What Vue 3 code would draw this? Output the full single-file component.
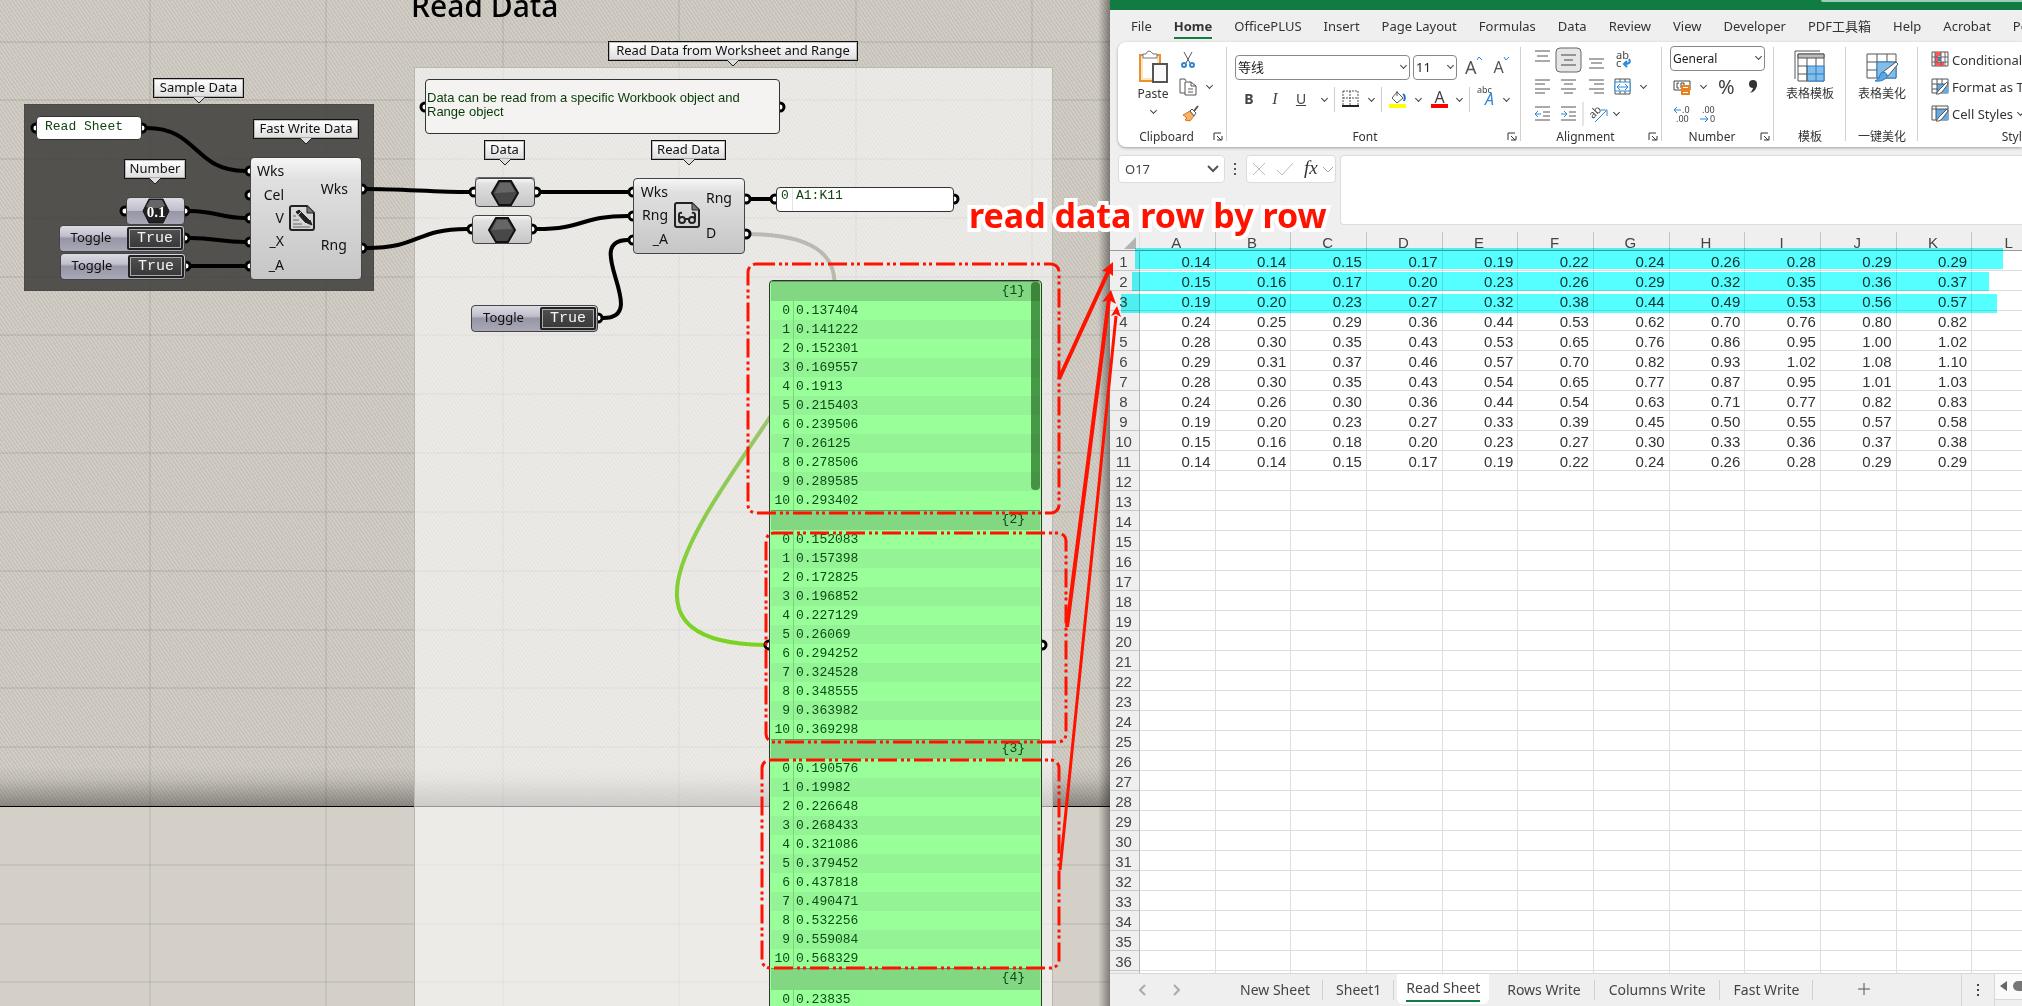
<script setup>
import { ref } from 'vue'

const gridX = [150, 326, 503, 679, 856, 1032]
const gridY = [42, 100, 159, 218, 277, 335, 394, 453, 512, 571, 630, 688, 747, 865, 924, 982]

const tags = [
  { text: 'Sample Data', x: 153, y: 78, w: 91 },
  { text: 'Fast Write Data', x: 253, y: 119, w: 106 },
  { text: 'Number', x: 124, y: 159, w: 62 },
  { text: 'Read Data from Worksheet and Range', x: 608, y: 41, w: 250 },
  { text: 'Data', x: 484, y: 140, w: 41 },
  { text: 'Read Data', x: 651, y: 140, w: 75 },
]

const grips = [
  [36, 128], [142, 128], [250, 171], [250, 195], [250, 218], [250, 242], [250, 266],
  [125, 211], [185, 211], [185, 238], [186, 266], [362, 189], [362, 248],
  [474, 192], [536, 192], [472, 229], [532, 229], [633, 192], [633, 216], [633, 240],
  [746, 199], [746, 234], [775, 199], [954, 199], [598, 318],
  [425, 107], [780, 107], [769, 645], [1042, 645],
]

const wires = [
  'M147 128C198 128 194 171 245 171',
  'M190 211C215 211 221 218 245 218',
  'M190 238C215 238 221 242 245 242',
  'M191 266H245',
  'M367 189C400 189 436 192 469 192',
  'M367 248C420 248 415 229 467 229',
  'M541 192H628',
  'M537 229C585 229 580 216 628 216',
  'M603 318C652 318 580 240 628 240',
  'M751 199H770',
]

const toggles = [
  { x: 59, y: 225, w: 126 },
  { x: 60, y: 253, w: 126 },
  { x: 471, y: 305, w: 127 },
]

const groups = [
  { path: '{1}', values: ['0.137404', '0.141222', '0.152301', '0.169557', '0.1913', '0.215403', '0.239506', '0.26125', '0.278506', '0.289585', '0.293402'] },
  { path: '{2}', values: ['0.152083', '0.157398', '0.172825', '0.196852', '0.227129', '0.26069', '0.294252', '0.324528', '0.348555', '0.363982', '0.369298'] },
  { path: '{3}', values: ['0.190576', '0.19982', '0.226648', '0.268433', '0.321086', '0.379452', '0.437818', '0.490471', '0.532256', '0.559084', '0.568329'] },
  { path: '{4}', values: ['0.23835'] },
]

const menu = ['File', 'Home', 'OfficePLUS', 'Insert', 'Page Layout', 'Formulas', 'Data', 'Review', 'View', 'Developer', 'PDF工具箱', 'Help', 'Acrobat', 'Power Pivot']
const columns = ['A', 'B', 'C', 'D', 'E', 'F', 'G', 'H', 'I', 'J', 'K', 'L']
const cells = [
  '0.14 0.14 0.15 0.17 0.19 0.22 0.24 0.26 0.28 0.29 0.29',
  '0.15 0.16 0.17 0.20 0.23 0.26 0.29 0.32 0.35 0.36 0.37',
  '0.19 0.20 0.23 0.27 0.32 0.38 0.44 0.49 0.53 0.56 0.57',
  '0.24 0.25 0.29 0.36 0.44 0.53 0.62 0.70 0.76 0.80 0.82',
  '0.28 0.30 0.35 0.43 0.53 0.65 0.76 0.86 0.95 1.00 1.02',
  '0.29 0.31 0.37 0.46 0.57 0.70 0.82 0.93 1.02 1.08 1.10',
  '0.28 0.30 0.35 0.43 0.54 0.65 0.77 0.87 0.95 1.01 1.03',
  '0.24 0.26 0.30 0.36 0.44 0.54 0.63 0.71 0.77 0.82 0.83',
  '0.19 0.20 0.23 0.27 0.33 0.39 0.45 0.50 0.55 0.57 0.58',
  '0.15 0.16 0.18 0.20 0.23 0.27 0.30 0.33 0.36 0.37 0.38',
  '0.14 0.14 0.15 0.17 0.19 0.22 0.24 0.26 0.28 0.29 0.29',
].map((row) => row.split(' '))
const lastRow = 36
const sheets = ['New Sheet', 'Sheet1', 'Read Sheet', 'Rows Write', 'Columns Write', 'Fast Write']

const activeMenu = ref('Home')
const activeSheet = ref('Read Sheet')
const cellName = ref('O17')
</script>

<template>
  <div class="page">
    <main class="canvas">
      <div class="hatch"></div>
      <svg class="layer" aria-hidden="true">
        <g stroke="#000" stroke-opacity=".13">
          <line v-for="x in gridX" :key="'x' + x" :x1="x" :x2="x" y1="0" y2="100%" stroke-width="1" />
          <line v-for="y in gridY" :key="'y' + y" :y1="y" :y2="y" x1="0" x2="100%" stroke-width="1" />
        </g>
      </svg>
      <h1 class="title">Read Data</h1>
      <section class="group dark"></section>
      <section class="group light"></section>

      <svg class="layer" aria-hidden="true">
        <defs>
          <linearGradient id="treeWire" x1="0" y1="0" x2="0" y2="1">
            <stop offset="0" stop-color="#b9bab5" />
            <stop offset=".15" stop-color="#b4bda6" />
            <stop offset=".5" stop-color="#97c766" />
            <stop offset="1" stop-color="#7ad321" />
          </linearGradient>
        </defs>
        <path d="M746 234C1046 234 462 645 769 645" fill="none" stroke="url(#treeWire)" stroke-width="4" />
        <g fill="none" stroke="#000" stroke-width="4">
          <path v-for="d in wires" :key="d" :d="d" />
        </g>
        <g fill="#fff" stroke="#000" stroke-width="3">
          <circle v-for="(g, i) in grips" :key="i" :cx="g[0]" :cy="g[1]" r="4" />
        </g>
      </svg>

      <div v-for="t in tags" :key="t.text" class="tag" :style="{ left: t.x + 'px', top: t.y + 'px', width: t.w + 'px' }">
        {{ t.text }}
        <svg width="12" height="8" viewBox="0 0 12 8"><path d="M0 0L6 6L12 0" fill="#dedede" stroke="#222" /></svg>
      </div>

      <div class="panel sheet-name">Read Sheet</div>
      <div class="panel note">Data can be read from a specific Workbook object and Range object</div>
      <div class="panel range"><span class="idx">0</span><span>A1:K11</span></div>

      <div class="node number-node">
        <svg width="28" height="26" viewBox="0 0 28 26">
          <path d="M7 1H21L27 13L21 25H7L1 13Z" fill="#222" stroke="#111" />
          <path d="M8 2H20L23 8Q14 12 4 9Z" fill="#666" />
          <text x="14" y="19" text-anchor="middle" class="hex-text">0.1</text>
        </svg>
      </div>
      <div class="node data-node first"><svg width="28" height="26" viewBox="0 0 28 26"><path d="M8 1H20L27 13L20 25H8L1 13Z" fill="#484848" stroke="#111" stroke-width="2" /><path d="M9 3H19L24 12L4 13Z" fill="#666" /></svg></div>
      <div class="node data-node second"><svg width="28" height="26" viewBox="0 0 28 26"><path d="M8 1H20L27 13L20 25H8L1 13Z" fill="#484848" stroke="#111" stroke-width="2" /><path d="M9 3H19L24 12L4 13Z" fill="#666" /></svg></div>

      <div v-for="(t, i) in toggles" :key="i" class="toggle" :style="{ left: t.x + 'px', top: t.y + 'px', width: t.w + 'px' }">
        <span>Toggle</span><button type="button">True</button>
      </div>

      <div class="node component write">
        <div class="ports in"><span>Wks</span><span>Cel</span><span>V</span><span>_X</span><span>_A</span></div>
        <svg width="28" height="28" viewBox="0 0 28 28" fill="none" stroke="#222" stroke-width="2">
          <path d="M4 2H19L26 9V24Q26 26 24 26H4Q2 26 2 24V4Q2 2 4 2Z" /><path d="M19 2V9H26" fill="#777" stroke-width="1" />
          <path d="M8 8L11 6L21 16L18 19Z" fill="#222" stroke-width="1" /><path d="M19 19L22 16L24 21Z" fill="#222" stroke-width="1" /><path d="M10 11L13 8" stroke="#ddd" stroke-width="1" /><path d="M5 12H8M5 16H11M5 20H14M5 23H22" stroke="#666" stroke-width="1" />
        </svg>
        <div class="ports out"><span>Wks</span><span>Rng</span></div>
      </div>
      <div class="node component read">
        <div class="ports in"><span>Wks</span><span>Rng</span><span>_A</span></div>
        <svg width="26" height="26" viewBox="0 0 26 26" fill="none" stroke="#222" stroke-width="2">
          <path d="M3 1H18L25 8V23Q25 25 23 25H3Q1 25 1 23V3Q1 1 3 1Z" /><path d="M18 1V8H25" fill="#777" stroke-width="1" />
          <circle cx="8" cy="18" r="3" /><circle cx="18" cy="18" r="3" /><path d="M11 17H15M5 17V13Q5 10 8 11M21 17V13Q21 10 18 11" />
        </svg>
        <div class="ports out"><span>Rng</span><span>D</span></div>
      </div>

      <div class="tree">
        <section v-for="g in groups" :key="g.path" class="branch">
          <div class="path">{{ g.path }}</div>
          <div v-for="(v, i) in g.values" :key="i" class="item"><span class="idx">{{ i }}</span><span>{{ v }}</span></div>
        </section>
        <div class="thumb"></div>
      </div>
      <div class="edge"></div>
    </main>

    <section class="excel">
      <div class="titlebar"><span></span></div>
      <nav class="menu">
        <button v-for="m in menu" :key="m" type="button" :class="{ active: m === activeMenu }" @click="activeMenu = m">{{ m }}</button>
      </nav>

      <div class="ribbon">
        <div class="rgroup clipboard">
          <div class="body">
            <button type="button" class="big paste">
              <svg width="32" height="34" viewBox="0 0 32 34" fill="none">
                <path d="M3 5H23V31H3Z" stroke="#e8912d" stroke-width="2" fill="#fbe3c3" /><path d="M6 8H20V28H6Z" fill="#fff" />
                <path d="M6 8V4H9Q10 1 12 1T16 4H20V8Z" fill="#fff" stroke="#777" /><path d="M16 14H30V32H16Z" fill="#fafafa" stroke="#555" stroke-width="2" />
              </svg>
              <span>Paste</span><i class="chev"></i>
            </button>
            <div class="stack">
              <div class="line"><svg width="14" height="18" viewBox="0 0 14 18" fill="none"><path d="M3 1L9 12M11 1L5 12" stroke="#555" /><circle cx="3" cy="14" r="2" stroke="#2b88d8" stroke-width="2" /><circle cx="11" cy="14" r="2" stroke="#2b88d8" stroke-width="2" /></svg></div>
              <div class="line"><svg width="18" height="18" viewBox="0 0 18 18" fill="none" stroke="#555"><path d="M6 15H1V1H6L7 3" /><path d="M6 4H12L17 8V17H6ZM12 4V8H17M9 11H14M9 14H14" /></svg><i class="chev"></i></div>
              <div class="line"><svg width="18" height="18" viewBox="0 0 18 18"><path d="M2 10L9 6L13 11L9 16L4 15L6 13Z" fill="#f4b26a" stroke="#d8741a" /><path d="M9 6L11 4L15 8L13 11Z" fill="#fff" stroke="#555" /><path d="M13 6L17 1" stroke="#555" stroke-width="2" /></svg></div>
            </div>
          </div>
          <div class="caption">Clipboard</div><svg class="launch" width="10" height="9" viewBox="0 0 10 9"><path d="M1 8V1H8M4 4L8 8M9 4V8H4" fill="none" stroke="#333" /></svg>
        </div>

        <div class="rgroup font">
          <div class="body col">
            <div class="line selects">
              <label class="pick wide"><select aria-label="Font"><option>等线</option></select><i class="chev"></i></label>
              <label class="pick size"><select aria-label="Font size"><option>11</option></select><i class="chev"></i></label>
              <button type="button" class="grow">A<svg width="7" height="16" viewBox="0 0 7 16"><path d="M1 5L3 2L6 5" fill="none" stroke="#2b88d8" /></svg></button>
              <button type="button" class="grow small">A<svg width="7" height="16" viewBox="0 0 7 16"><path d="M1 2L3 5L6 2" fill="none" stroke="#2b88d8" /></svg></button>
            </div>
            <div class="line marks">
              <button type="button"><b>B</b></button><button type="button" class="it">I</button>
              <button type="button"><u>U</u></button><i class="chev"></i><i class="vr"></i>
              <svg width="18" height="18" viewBox="0 0 18 18" fill="none" stroke="#555"><path d="M1 1H16V15M1 1V15M8 1V15M1 8H16" stroke-dasharray="2 1" /><path d="M0 16H17" stroke="#222" stroke-width="2" /></svg><i class="chev"></i><i class="vr"></i>
              <svg width="18" height="18" viewBox="0 0 18 18"><path d="M8 2L14 8L8 13L3 8ZM8 1V6" fill="#fff" stroke="#555" /><path d="M14 4Q17 6 15 11" stroke="#1f6fb8" stroke-width="2" fill="none" /><path d="M0 14H17V18H0Z" fill="#ff0" /></svg><i class="chev"></i>
              <button type="button" class="color">A</button><i class="chev"></i><i class="vr"></i>
              <span class="phonetic"><small>abc</small><em>A</em></span><i class="chev"></i>
            </div>
          </div>
          <div class="caption">Font</div><svg class="launch" width="10" height="9" viewBox="0 0 10 9"><path d="M1 8V1H8M4 4L8 8M9 4V8H4" fill="none" stroke="#333" /></svg>
        </div>

        <div class="rgroup align">
          <div class="body icons">
            <svg width="28" height="26" viewBox="0 0 28 26" stroke="#555"><path d="M7 4H22M9 9H20M7 14H22" /></svg>
            <svg width="28" height="26" viewBox="0 0 28 26" stroke="#444"><rect x="1" y="1" width="25" height="24" rx="4" fill="#e6e6e6" stroke="#666" /><path d="M6 8H21M9 13H18M6 18H21" /></svg>
            <svg width="28" height="26" viewBox="0 0 28 26" stroke="#555"><path d="M7 12H22M9 16H20M7 21H22" /></svg>
            <svg width="28" height="26" viewBox="0 0 28 26"><text x="7" y="12" class="glyph">ab</text><text x="7" y="20" class="glyph">c</text><path d="M20 12Q23 17 15 17M18 14L15 17L18 20" fill="none" stroke="#2b88d8" stroke-width="2" /></svg>
            <i></i>
            <svg width="28" height="26" viewBox="0 0 28 26" stroke="#555"><path d="M7 6H22M7 10H17M7 15H22M7 19H17" /></svg>
            <svg width="28" height="26" viewBox="0 0 28 26" stroke="#555"><path d="M6 6H21M9 10H18M6 15H21M9 19H18" /></svg>
            <svg width="28" height="26" viewBox="0 0 28 26" stroke="#555"><path d="M7 6H22M12 10H22M7 15H22M12 19H22" /></svg>
            <svg width="28" height="26" viewBox="0 0 28 26" fill="none"><path d="M6 5H21V20H6ZM11 5V8M16 5V8M11 17V20M16 17V20" stroke="#555" /><path d="M6 8H21V17H6Z" stroke="#2b88d8" fill="#fff" /><path d="M8 13H19M11 10L8 13L11 16M16 10L19 13L16 16" stroke="#2b88d8" stroke-width="1" /></svg>
            <i class="chev"></i>
            <svg width="28" height="26" viewBox="0 0 28 26" fill="none" stroke="#555"><path d="M7 6H22M15 11H22M15 15H22M7 19H22" /><path d="M7 13H13M10 10L7 13L10 16" stroke="#2b88d8" /></svg>
            <svg width="28" height="26" viewBox="0 0 28 26" fill="none" stroke="#555"><path d="M6 6H21M14 11H21M14 15H21M6 19H21" /><path d="M6 13H12M9 10L12 13L9 16" stroke="#2b88d8" /></svg>
            <svg width="28" height="26" viewBox="0 0 28 26"><path d="M1 1V25" stroke="#ccc" /><text x="7" y="15" class="glyph" transform="rotate(-45 13 12)">ab</text><path d="M13 21L24 10M19 9H25V15" fill="none" stroke="#2b88d8" /></svg>
            <i class="chev orient"></i>
          </div>
          <div class="caption">Alignment</div><svg class="launch" width="10" height="9" viewBox="0 0 10 9"><path d="M1 8V1H8M4 4L8 8M9 4V8H4" fill="none" stroke="#333" /></svg>
        </div>

        <div class="rgroup number">
          <div class="body col">
            <label class="pick general"><select aria-label="Number format"><option>General</option></select><i class="chev"></i></label>
            <div class="line nums">
              <svg width="18" height="18" viewBox="0 0 18 18" fill="none"><path d="M1 3H17V12H1ZM6 5H4V10H6M8 10V5H11V10" stroke="#444" stroke-width="1" /><path d="M9 8H16V16H9ZM9 11H16M9 13H16" fill="#fff" stroke="#e8821e" stroke-width="2" /></svg>
              <i class="chev"></i><span class="pct">%</span>
              <svg width="10" height="14" viewBox="0 0 10 14"><circle cx="5" cy="4" r="4" fill="#333" /><path d="M9 4Q9 11 2 13Q6 9 5 5Z" fill="#333" /></svg>
            </div>
            <div class="line nums decimals">
              <svg width="18" height="20" viewBox="0 0 18 20"><text x="9" y="9" class="deci">.0</text><text x="3" y="18" class="deci">.00</text><path d="M1 6H8M4 3L1 6L4 9" fill="none" stroke="#2b88d8" stroke-width="1" /></svg>
              <svg width="18" height="20" viewBox="0 0 18 20"><text x="3" y="9" class="deci">.00</text><text x="11" y="18" class="deci">0</text><path d="M1 15H9M6 12L9 15L6 18" fill="none" stroke="#2b88d8" stroke-width="1" /></svg>
            </div>
          </div>
          <div class="caption">Number</div><svg class="launch" width="10" height="9" viewBox="0 0 10 9"><path d="M1 8V1H8M4 4L8 8M9 4V8H4" fill="none" stroke="#333" /></svg>
        </div>

        <div class="rgroup plug">
          <div class="body"><button type="button" class="big">
            <svg width="32" height="34" viewBox="0 0 32 34" fill="none" stroke="#555"><path d="M1 29V1H26" /><path d="M4 4H30V31H4Z" fill="#fff" /><path d="M4 4H30V8H4Z" fill="#bbb" /><path d="M13 16H30V31H13Z" fill="#83bdea" stroke="#2b7cc4" /><path d="M4 16H13M4 24H13M13 8V31M22 8V16" /><path d="M22 16V31M13 24H30" stroke="#2b7cc4" /></svg>
            <span>表格模板</span></button></div>
          <div class="caption">模板</div>
        </div>
        <div class="rgroup plug">
          <div class="body"><button type="button" class="big">
            <svg width="34" height="34" viewBox="0 0 34 34" fill="none" stroke="#555"><path d="M2 4H31V28H2ZM2 12H31M2 20H12M12 4V28M22 4V12" fill="#fff" /><path d="M12 12H31V28H12Z" fill="#83bdea" stroke="#2b7cc4" /><path d="M18 22L31 12L33 14L23 26Z" fill="#fff" /><path d="M18 22Q23 23 22 27Q18 32 10 31Q15 29 15 25Q16 22 18 22Z" fill="#5ea6df" stroke="#2b7cc4" /></svg>
            <span>表格美化</span></button></div>
          <div class="caption">一键美化</div>
        </div>

        <div class="rgroup styles">
          <div class="body col">
            <button type="button"><svg width="18" height="17" viewBox="0 0 18 17"><path d="M1 1H17V15H1Z" fill="#fff" stroke="#555" /><path d="M4 1H10V5H7V11H13V15H4Z" fill="#f55" /><path d="M7 6H10V10H7Z" fill="#2b88d8" /><path d="M1 6H17M1 11H17M4 1V15M10 1V15M14 1V15" stroke="#666" fill="none" /></svg>Conditional Formatting</button>
            <button type="button"><svg width="18" height="17" viewBox="0 0 18 17"><path d="M1 1H17V15H1Z" fill="#fff" stroke="#555" /><path d="M6 6H17V15H6Z" fill="#64aae5" /><path d="M1 6H17M1 11H7M6 1V15M11 1V6" stroke="#555" fill="none" /><path d="M8 12L16 4L17 6L11 14Q8 17 5 16Z" fill="#fff" stroke="#555" /></svg>Format as Table</button>
            <button type="button"><svg width="18" height="17" viewBox="0 0 18 17"><path d="M1 1H17V15H1Z" fill="#fff" stroke="#555" /><path d="M5 4H17V15H5Z" fill="#64aae5" /><path d="M1 4H17M5 1V15" stroke="#555" fill="none" /><path d="M8 12L16 4L17 6L11 14Q8 17 5 16Z" fill="#fff" stroke="#555" /></svg>Cell Styles<i class="chev"></i></button>
          </div>
          <div class="caption">Styles</div>
        </div>
      </div>

      <div class="formula">
        <div class="namebox"><input v-model="cellName" aria-label="Name box" /><svg width="12" height="8" viewBox="0 0 12 8"><path d="M1 1L6 6L11 1" fill="none" stroke="#555" stroke-width="2" /></svg></div>
        <svg class="dots" width="4" height="14" viewBox="0 0 4 14" fill="#555"><path d="M1 1H3V3H1ZM1 6H3V8H1ZM1 11H3V13H1Z" /></svg>
        <div class="fxbox">
          <svg width="88" height="26" viewBox="0 0 88 26" fill="none"><path d="M6 7L18 19M18 7L6 19" stroke="#bbb" /><path d="M30 14L35 19L46 7" stroke="#bbb" /><text x="57" y="18" class="fx">fx</text><path d="M76 11L81 16L86 11" stroke="#aaa" /></svg>
        </div>
        <textarea aria-label="Formula bar"></textarea>
      </div>

      <div class="grid">
        <table>
          <thead><tr><th class="corner"><svg width="12" height="12" viewBox="0 0 12 12"><path d="M12 0V12H0Z" fill="#b3b3b3" /></svg></th><th v-for="c in columns" :key="c" scope="col">{{ c }}</th></tr></thead>
          <tbody>
            <tr v-for="r in lastRow + 1" :key="r"><th scope="row">{{ r > lastRow ? '' : r }}</th><td v-for="(c, i) in columns" :key="c">{{ cells[r - 1]?.[i] }}</td></tr>
          </tbody>
        </table>
        <div class="mark m1"></div><div class="mark m2"></div><div class="mark m3"></div>
      </div>

      <div class="tabs">
        <svg class="arrows" width="44" height="12" viewBox="0 0 44 12" fill="none" stroke="#aaa" stroke-width="2"><path d="M7 1L2 6L7 11M36 1L41 6L36 11" /></svg>
        <button v-for="s in sheets" :key="s" type="button" :class="{ active: s === activeSheet }" @click="activeSheet = s"><span>{{ s }}</span></button>
        <button type="button" class="plus" aria-label="New sheet"><svg width="12" height="12" viewBox="0 0 12 12"><path d="M6 0V12M0 6H12" stroke="#555" /></svg></button>
        <div class="more"><svg width="4" height="14" viewBox="0 0 4 14" fill="#444"><path d="M1 1H3V3H1ZM1 6H3V8H1ZM1 11H3V13H1Z" /></svg></div>
        <div class="scroll"><svg width="27" height="24" viewBox="0 0 27 24"><path d="M12 7V17L5 12Z" fill="#666" /><rect x="18" y="7" width="20" height="10" rx="5" fill="#777" /></svg></div>
      </div>
    </section>

    <svg class="layer notes" aria-hidden="true">
      <g fill="none" stroke="#ff1200" stroke-width="3" stroke-dasharray="19 4 3 3 3 4">
        <rect x="748" y="264" width="311" height="249" rx="8" />
        <rect x="766" y="533" width="300" height="209" rx="8" />
        <rect x="762" y="760" width="297" height="208" rx="8" />
      </g>
      <g fill="none" stroke="#ff1200">
        <path d="M1059 379L1109 270" stroke-width="4" /><path d="M1067 627L1109 299" stroke-width="4" /><path d="M1060 870L1116 316" stroke-width="3" />
      </g>
      <g fill="#ff1200">
        <path d="M1113 262L1113 276L1108 272L1102 271Z" /><path d="M1111 290L1116 304L1109 300L1102 302Z" /><path d="M1117 306L1121 317L1116 314L1111 316Z" />
      </g>
    </svg>
    <p class="callout">read data row by row</p>
  </div>
</template>

<style>
body { background: #d4d0c8; overflow: hidden; }
</style>

<style scoped>
* { box-sizing: border-box; }
.page { position: relative; display: grid; grid-template-columns: minmax(0, 1110fr) minmax(0, 912fr); height: 100vh; overflow: hidden; font-family: "Noto Sans", "Noto Sans CJK SC", sans-serif; color: #222; }
button { border: 0; background: none; padding: 0; font: inherit; color: inherit; }
svg { display: block; flex: none; }
.layer { position: absolute; inset: 0; width: 100%; height: 100%; }

.canvas { position: relative; overflow: hidden; background: #d4d0c8; }
.hatch { position: absolute; left: 0; right: 0; top: 0; height: 807px; border-bottom: 1px solid #000; background: linear-gradient(#0000 766px, #0001 780px, #0005 806px), repeating-linear-gradient(55deg, #c5c1b8 0 1px, #d3cfc7 2px 3px); }
.edge { position: absolute; top: 0; bottom: 0; right: 0; width: 12px; background: linear-gradient(90deg, #0000, #0006); }
.title { position: absolute; left: 411px; top: -17px; margin: 0; font-size: 30px; line-height: 46px; font-weight: 500; color: #000; white-space: nowrap; }
.group { position: absolute; }
.dark { left: 24px; top: 104px; width: 350px; height: 187px; background: #3d3c39d9; border: 1px solid #4a4946; }
.light { left: 414px; top: 67px; width: 639px; bottom: -2px; background: #ffffff94; border: 1px solid #b9b7b1; }

.tag { position: absolute; height: 20px; border: 1px solid #111; background: linear-gradient(#fff, #dedede); font-size: 13px; line-height: 16px; text-align: center; color: #111; white-space: nowrap; box-shadow: inset 0 0 0 1px #8888; }
.tag svg { position: absolute; left: calc(50% - 6px); top: 18px; }

.panel { position: absolute; border: 1px solid #333; border-radius: 4px; background: #fff; color: #114411; font-family: "Liberation Mono", monospace; font-size: 13px; line-height: 16px; }
.sheet-name { left: 36px; top: 116px; width: 106px; height: 24px; padding: 2px 8px; }
.note { left: 425px; top: 79px; width: 355px; height: 55px; padding: 11px 1px; background: #f4f3f1; font-family: "Liberation Sans", sans-serif; line-height: 14px; color: #063b06; }
.range { left: 776px; top: 187px; width: 178px; height: 25px; display: flex; }
.range .idx { width: 16px; padding-left: 4px; border-right: 1px solid #e4e4e4; margin-right: 3px; }

.node { position: absolute; display: flex; align-items: center; justify-content: center; border: 1px solid #444; border-radius: 4px; background: linear-gradient(#f6f6f6, #e0e0e0 18%, #c6c6c6); }
.number-node { left: 126px; top: 197px; width: 59px; height: 28px; background: linear-gradient(#dcdce4, #c0bfcc 48%, #9796a6 50%, #a9a8b6); }
.hex-text { font: bold 15px "Liberation Serif", serif; fill: #fff; }
.data-node { height: 29px; width: 60px; }
.first { left: 475px; top: 178px; box-shadow: 0 -1px 0 #666; }
.second { left: 472px; top: 215px; }
.component { font-size: 14px; color: #111; justify-content: space-between; align-items: stretch; }
.component > svg { align-self: center; }
.ports { display: flex; flex-direction: column; justify-content: space-around; }
.in { text-align: right; }
.write { left: 250px; top: 157px; width: 112px; height: 123px; padding: 1px 13px 3px 6px; }
.write .in { width: 27px; }
.write .out { padding: 2px 0 4px; }
.read { left: 633px; top: 178px; width: 112px; height: 76px; padding: 1px 12px 3px 6px; }
.read .in { width: 28px; }

.toggle { position: absolute; height: 27px; display: flex; border: 1px solid #444; border-radius: 4px; padding: 1px; background: linear-gradient(#dcdce4, #c0bfcc 40%, #9796a6 50%, #a9a8b6); }
.toggle span { flex: 1; text-align: center; font-size: 13px; line-height: 21px; padding-right: 6px; color: #111; }
.toggle button { width: 56px; border: 2px solid #222; border-radius: 2px; background: linear-gradient(#505050, #383838); box-shadow: inset 0 0 0 1px #aaa; color: #f4f4f4; font: 15px/18px "Liberation Mono", monospace; }

.tree { position: absolute; left: 769px; top: 280px; width: 273px; bottom: -8px; overflow: hidden; border: 1px solid #333; border-radius: 4px; background: #99ff99; font: 13px "Liberation Mono", monospace; color: #0b4a16; padding: 0 1px; }
.branch { height: 229px; display: flex; flex-direction: column; }
.path { height: 22px; line-height: 17px; text-align: right; padding-right: 15px; background: #82d782; border-top: 1px solid #5e9d5e; }
.item { flex: 1; max-height: 19px; display: flex; line-height: 19px; }
.item:nth-child(odd) { background: #94f394; }
.item .idx { width: 23px; padding-right: 3px; margin-right: 2px; text-align: right; border-right: 1px solid #7bd57b; }
.thumb { position: absolute; right: 1px; top: 1px; width: 9px; height: 208px; border-radius: 4px; background: #00400088; }

.excel { position: relative; display: flex; flex-direction: column; min-width: 0; overflow: hidden; background: #efefef; }
.titlebar { height: 10px; background: #107c41; display: flex; justify-content: flex-end; flex: none; }
.titlebar span { width: 201px; height: 2px; background: #9fcdb3; border-radius: 0 0 0 4px; }
.menu { display: flex; flex: none; height: 32px; gap: 22px; padding-left: 21px; font-size: 13px; white-space: nowrap; color: #333; }
.menu button { height: 29px; line-height: 33px; border-bottom: 2px solid transparent; flex: none; }
.menu .active { font-weight: 700; border-color: #107c41; }

.ribbon { display: flex; flex: none; height: 105px; margin-left: 8px; background: #fff; border-radius: 8px 0 0 8px; box-shadow: 0 1px 3px #0005; overflow: hidden; font-size: 12px; color: #333; }
.rgroup { position: relative; flex: none; display: flex; flex-direction: column; padding: 4px 0 0; }
.rgroup:not(:last-child)::after { content: ""; position: absolute; right: 0; top: 5px; bottom: 6px; width: 1px; background: #d0d0d0; }
.body { height: 82px; display: flex; }
.col { flex-direction: column; }
.caption { height: 18px; line-height: 18px; text-align: center; white-space: nowrap; }
.launch { position: absolute; right: 4px; bottom: 6px; }
.chev { display: block; flex: none; width: 5px; height: 5px; border: solid #444; border-width: 0 1px 1px 0; rotate: 45deg; margin: 0 2px 3px; }
.line { display: flex; align-items: center; height: 27px; }
.big { display: flex; flex-direction: column; align-items: center; padding-top: 4px; white-space: nowrap; }
.big span { line-height: 20px; }
.clipboard { width: 109px; }
.clipboard .caption, .number .caption, .align .caption { padding-right: 12px; }
.paste { width: 32px; margin: 0 10px 0 19px; font-size: 12px; }
.paste .chev { margin-top: 4px; }
.stack .line { gap: 8px; }
.stack .line:not(:nth-child(2)) { padding-left: 2px; }
.font { width: 294px; }
.font .caption { padding-right: 18px; }
.pick { position: relative; display: block; }
.pick select { appearance: none; width: 100%; height: 25px; border: 1px solid #888; border-radius: 4px; background: #fff; padding: 0 2px; font: inherit; color: #222; }
.pick .chev { position: absolute; right: 4px; top: 8px; margin: 0; }
.selects { gap: 3px; padding-left: 8px; margin-top: 8px; height: 26px; font-size: 13px; }
.wide { width: 175px; }
.size { width: 44px; }
.grow { display: flex; font-size: 18px; line-height: 24px; margin-left: 5px; color: #555; }
.grow svg { margin-left: -1px; }
.grow.small { font-size: 16px; margin-left: 8px; }
.marks { padding-left: 15px; margin-top: 5px; height: 28px; gap: 7px; font-size: 14px; color: #444; }
.marks button { width: 14px; margin-right: 5px; line-height: 22px; }
.marks .chev { margin: 0 3px 2px 2px; }
.marks .vr { width: 1px; height: 25px; background: #ccc; margin-left: -3px; }
.it { font-family: "Liberation Serif", serif; font-style: italic; font-size: 16px; }
.marks .color { width: 17px; margin-right: 0; border-bottom: 4px solid #f00; line-height: 14px; height: 18px; font-size: 16px; }
.phonetic { display: flex; width: 18px; }
.phonetic small { font-size: 9px; line-height: 10px; }
.phonetic em { font-size: 16px; line-height: 28px; color: #2b88d8; margin-left: -7px; }
.align { width: 141px; }
.icons { display: grid; grid-template-columns: 27px 27px 27px 27px 14px; grid-auto-rows: 27px; align-items: center; padding-left: 7px; }
.icons > svg { overflow: visible; }
.glyph { font-size: 11px; fill: #444; stroke: none; }
.icons .chev { margin: 0 5px 3px; }
.number { width: 112px; }
.general { width: 95px; height: 27px; margin-left: 8px; font-size: 12px; }
.nums { padding-left: 11px; gap: 8px; }
.pct { font-size: 20px; line-height: 24px; margin: 0 5px 0 2px; color: #444; }
.deci { font-size: 9px; fill: #444; }
.plug { width: 72px; align-items: stretch; }
.plug .body { justify-content: center; }
.plug .big { font-size: 12px; }
.styles { width: 180px; }
.styles button { display: flex; align-items: center; gap: 3px; height: 27px; font-size: 13px; white-space: nowrap; padding-left: 13px; }
.styles .caption { padding-left: 20px; }

.formula { display: flex; flex: none; height: 85px; padding: 8px 0 7px 8px; align-items: flex-start; }
.namebox, .fxbox { height: 28px; background: #fff; border: 1px solid #dcdcdc; border-radius: 4px; display: flex; align-items: center; }
.namebox { width: 107px; padding-right: 5px; }
.namebox input { border: 0; outline: 0; min-width: 0; flex: 1; padding: 0 6px; background: none; font: 13px "Noto Sans", sans-serif; color: #444; }
.dots { margin: 7px 9px 0 8px; }
.fxbox { width: 90px; margin-right: 4px; }
.fx { font: italic 19px "Liberation Serif", serif; fill: #333; }
textarea { flex: 1; height: 70px; resize: none; border: 1px solid #dcdcdc; border-right: 0; border-radius: 4px 0 0 4px; background: #fff; outline: 0; margin: 0; }

.grid { position: relative; flex: 1; min-height: 0; overflow: hidden; background: #fff; font-family: "Liberation Sans", sans-serif; }
table { width: calc(100% + 26px); table-layout: fixed; border-collapse: separate; border-spacing: 0; font-size: 15px; color: #333; }
th, td { height: 20px; padding: 2px 4px 0 0; border-right: 1px solid #dedede; border-bottom: 1px solid #dedede; line-height: 17px; overflow: hidden; }
th { font-weight: 400; background: #efefef; padding-right: 2px; color: #444; }
thead th { height: 19px; line-height: 15px; border-right-color: #c4c4c4; border-bottom-color: #999; padding-top: 3px; }
tbody th { border-right-color: #b5b5b5; border-bottom-color: #c8c8c8; }
td { text-align: right; }
.corner { width: 30px; border-right-color: #e0e0e0; }
.corner svg { margin-left: 14px; }
.mark { position: absolute; background: #55ffff; mix-blend-mode: multiply; }
.m1 { left: 25px; right: 19px; top: 16px; height: 21px; }
.m2 { left: 22px; right: 33px; top: 40px; height: 19px; }
.m3 { left: 11px; right: 25px; top: 62px; height: 19px; }

.tabs { display: flex; flex: none; height: 33px; align-items: flex-start; border-top: 1px solid #d8d8d8; font-size: 14px; color: #444; white-space: nowrap; }
.arrows { margin: 10px 45px 0 28px; }
.tabs button { position: relative; height: 30px; padding: 0 13px; line-height: 32px; }
.tabs .active ~ button { padding: 0 14px; }
.tabs button:not(.active):not(.plus)::after { content: ""; position: absolute; right: 0; top: 6px; bottom: 4px; width: 1px; background: #d0d0d0; }
.tabs .active { background: #fff; border-radius: 0 0 6px 6px; padding: 0 9px; margin: 0 4px 0 3px; }
.active span { display: block; }
.tabs .active span { line-height: 24px; border-bottom: 2px solid #107c41; }
.tabs .plus { margin-left: 31px; }
.more { margin-left: auto; width: 34px; height: 32px; border: solid #d8d8d8; border-width: 0 1px; padding: 9px 0 0 14px; }
.scroll { width: 27px; height: 26px; background: #fafafa; border-bottom: 1px solid #d8d8d8; }

.notes { pointer-events: none; }
.callout { position: absolute; left: 969px; top: 198px; margin: 0; font-size: 34px; line-height: 34px; font-weight: 700; color: #ff1200; white-space: nowrap; -webkit-text-stroke: 8px #fff; paint-order: stroke fill; }
</style>
